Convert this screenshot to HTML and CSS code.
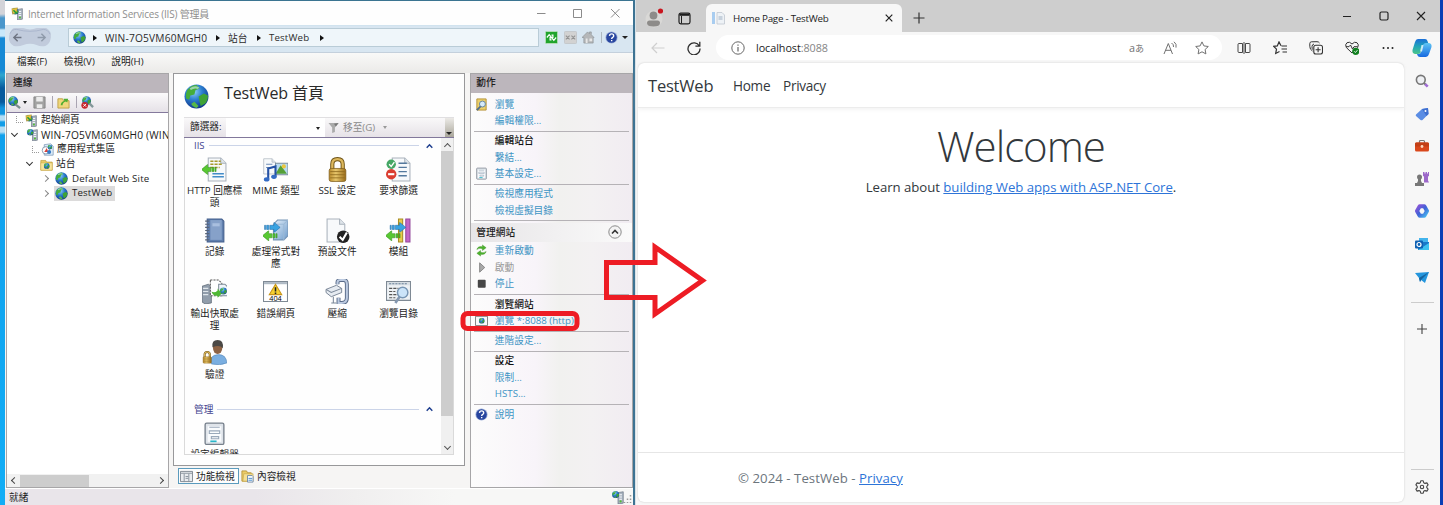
FILE: index.html
```html
<!DOCTYPE html>
<html lang="zh-Hant">
<head>
<meta charset="utf-8">
<title>IIS - TestWeb</title>
<link rel="stylesheet" href="styles.css">
</head>
<body>
<svg width="0" height="0" class="defs">
  <defs>
    <radialGradient id="sea" cx=".4" cy=".3" r=".75"><stop offset="0" stop-color="#8fd0f5"/><stop offset=".45" stop-color="#2c7fd0"/><stop offset="1" stop-color="#0d2f86"/></radialGradient>
    <linearGradient id="gold" x1="0" x2="1"><stop offset="0" stop-color="#b98a2c"/><stop offset=".4" stop-color="#e8c76c"/><stop offset="1" stop-color="#9a6b18"/></linearGradient>
    <linearGradient id="box" x1="0" y1="0" x2="1" y2="1"><stop offset="0" stop-color="#e6f1fb"/><stop offset="1" stop-color="#6d9bcb"/></linearGradient>
    <linearGradient id="cop1" x1="0" y1="0" x2="0" y2="1"><stop offset="0" stop-color="#1b6fd8"/><stop offset=".5" stop-color="#21a6b8"/><stop offset="1" stop-color="#4cc58a"/></linearGradient>
    <linearGradient id="cop2" x1="0" y1="0" x2="0" y2="1"><stop offset="0" stop-color="#5fc6f5"/><stop offset="1" stop-color="#1769e0"/></linearGradient>
    <linearGradient id="m365" x1="0" y1="0" x2="1" y2="1"><stop offset="0" stop-color="#8a55d8"/><stop offset=".5" stop-color="#3f62d6"/><stop offset="1" stop-color="#48b7ee"/></linearGradient>
  </defs>
  <symbol id="globe" viewBox="0 0 24 24"><circle cx="12" cy="12" r="11.500" fill="url(#sea)"/><path d="M3 6Q7 1 12 1l3 3-4 2-1 4-4 1-1 4-3-1q-1-4 1-8z" fill="#45ad3a"/><path d="M14 12l5-3 4 2q0 5-3 8l-4 2-1-4z" fill="#3fa336"/><path d="M7 19l3-2 4 4-2 2q-4-1-5-4z" fill="#57b848"/><path d="M6 5q4-3 8-1" fill="none" stroke="#d7f0fa" stroke-opacity=".6" stroke-width="2"/></symbol>
  <symbol id="server" viewBox="0 0 16 16"><path d="M8 3l6-1v13l-6 1z" fill="#a9b4c0" stroke="#6a7684" stroke-width=".8"/><path d="M9.500 5.500h3M9.500 8h3M9.500 10.500h3" stroke="#f6f8fa" stroke-width="1.200"/><circle cx="11" cy="13" r="1.200" fill="#50c030"/><use href="#globe" x="1" y="1" width="8.500" height="8.500"/></symbol>
  <symbol id="startpg" viewBox="0 0 16 16"><use href="#server"/><path d="M1 2l7-1-1 5-5 3z" fill="#e8c440" stroke="#9b8124" stroke-width=".5"/><path d="M3 4l4 4" stroke="#279c39" stroke-width="2"/></symbol>
  <symbol id="pool" viewBox="0 0 16 16"><path d="M4 2l8-1 3 3v11H4z" fill="#dceaf7" stroke="#6c8cad" stroke-width=".8"/><circle cx="6" cy="9" r="4.500" fill="#fff" stroke="#748ca5"/><use href="#globe" x="8" y="2" width="6" height="6"/><path d="M4 11l3-5 2 5z" fill="#d8413a"/><circle cx="10" cy="11" r="2.500" fill="#357bc7"/></symbol>
  <symbol id="folder" viewBox="0 0 16 16"><path d="M1 3h6l1 2h7v10H1z" fill="#eacb66" stroke="#b99632" stroke-width=".8"/><path d="M1 6h14v9H1z" fill="#f7e49c" stroke="#c9a844" stroke-width=".6"/><use href="#globe" x="4.500" y="6" width="7.500" height="7.500"/></symbol>
  <symbol id="help" viewBox="0 0 16 16"><circle cx="8" cy="8" r="7.500" fill="#9fb0d8"/><circle cx="8" cy="8" r="6.500" fill="#27459f"/><path d="M5.500 6q.2-2.500 2.700-2.500T10.700 6q0 1-1.300 1.800Q8.200 8.500 8.200 9.700M8.200 11v1.700" fill="none" stroke="#fff" stroke-width="1.700"/></symbol>
  <symbol id="form" viewBox="0 0 24 24"><rect x="3" y="2" width="18" height="20.500" rx="1.500" fill="#dfe4ea" stroke="#77808c" stroke-width="1.300"/><path d="M5.500 5h13v15h-13z" fill="#f9fbfd"/><path d="M7 6h10M7 9.500h10v2.500H7zM9 15h7v2H9z" fill="none" stroke="#9aa9ba" stroke-width="1.100"/><path d="M8 19.500h6" stroke="#28b6c9" stroke-width="1.600"/></symbol>
  <symbol id="page" viewBox="0 0 24 24"><path d="M4 1h12l5 5v17H4z" fill="#f7f9fb" stroke="#a9b2bc"/><path d="M16 1v5h5" fill="#dfe5ea" stroke="#a9b2bc"/></symbol>
  <symbol id="lock" viewBox="0 0 24 24"><path d="M7 13V7q0-5 5-5t5 5v6" fill="none" stroke="#6e5315" stroke-width="4"/><path d="M7 13V7q0-5 5-5t5 5v6" fill="none" stroke="#dcb75c" stroke-width="2.200"/><rect x="4" y="11" width="16" height="12.500" rx="2" fill="url(#gold)" stroke="#7c5a17" stroke-width=".7"/><path d="M5 14h14M5 17h14M5 20h14" stroke="#8f6a1e" stroke-width=".8"/></symbol>
  <symbol id="left" viewBox="0 0 16 10"><path d="M0 5l6-5v3h3v4H6v3zM10 3h2v4h-2zM13 3h1v4h-1z" fill="#58c832" stroke="#318c1c" stroke-width=".5"/></symbol>
  <symbol id="right" viewBox="0 0 16 10"><path d="M16 5l-6-5v3H6v4h4v3zM3 3h2v4H3zM1 3h1v4H1z" fill="#38a3e2" stroke="#1c68a8" stroke-width=".5"/></symbol>
  <symbol id="up" viewBox="0 0 8 6"><path d="M.8 5L4 1.600 7.200 5" fill="none" stroke="currentColor" stroke-width="1.700"/></symbol>
</svg>
<div class="screen">
  <div class="desk"></div>
  <section class="iis">
    <header class="iis-title">
      <svg class="i13"><use href="#startpg"/></svg><span class="ttl">Internet Information Services (IIS) 管理員</span>
      <svg class="winctl" viewBox="0 0 86 12"><path d="M1 6.500h8.500M37.500 2.500h8v8h-8zM75 2l8.500 8.500M83.500 2L75 10.500" fill="none" stroke="#8b8b8b"/></svg>
    </header>
    <div class="iis-nav">
      <svg class="backfwd" viewBox="0 0 46 20"><path d="M6 0h10q7 3 14 0h10q6 3 5 10t-6 9q-5 1-9-1-7-3-14 0-5 2-10 1-6-3-5-10T6 0z" fill="#c1cbdc"/><path d="M2 6q2-5 7-4.500 14 4 28 0 5 0 7 5" fill="none" stroke="#aab5cc"/><path d="M14 10H6m4-4l-4 4 4 4" fill="none" stroke="#6f7583" stroke-width="1.500"/><path d="M31 10h8m-4-4l4 4-4 4" fill="none" stroke="#8f9aaa" stroke-width="1.500"/></svg>
      <div class="crumbs"><svg class="i13"><use href="#globe"/></svg><b></b><span class="wn">WIN-7O5VM60MGH0</span><b></b><span class="zt">站台</span><b></b><span class="tw">TestWeb</span><b></b></div>
      <div class="navico">
        <svg viewBox="0 0 14 14"><rect x=".5" y=".5" width="13" height="13" rx="1" fill="#21a42c" stroke="#b6dfb7"/><path d="M2 7l2.500-3L7 7H5.500v2.500H7M12 7L9.500 10 7 7h1.500V4.500H7" fill="none" stroke="#fff" stroke-width="1.300"/></svg>
        <svg viewBox="0 0 14 14"><rect x=".5" y=".5" width="13" height="13" rx="1" fill="#d2d2d2" stroke="#c2c6c9"/><path d="M2 5l4 4m0-4L2 9m6-4l4 4m0-4L8 9" stroke="#929292" stroke-width="1.200"/></svg>
        <svg viewBox="0 0 14 14"><path d="M0 7l6-6 2 2V1h2v3l3 3h-1v6H2V7z" fill="#b5b7b9" stroke="#8c9195" stroke-width=".7"/><path d="M4 8h2v5H4zM8 8h3v3H8z" fill="#e7e7e7"/></svg>
        <i></i><svg class="hp"><use href="#help"/></svg><em></em>
      </div>
    </div>
    <nav class="iis-menu"><span>檔案(F)</span><span>檢視(V)</span><span>說明(H)</span></nav>
    <div class="iis-body">
      <aside class="conn">
        <h2>連線</h2>
        <div class="ctool">
          <svg viewBox="0 0 14 14"><use href="#globe" width="11" height="11"/><path d="M8 9l5 4" stroke="#7b8d8e" stroke-width="2.500"/></svg><em></em>
          <svg class="sv" viewBox="0 0 14 14"><path d="M1 1h12v12H1z" fill="#a2a2a2" stroke="#858585"/><path d="M3.500 1h7v5h-7zM4 9h6v4H4z" fill="#ececec"/></svg><i></i>
          <svg viewBox="0 0 14 14"><path d="M1 3h5l1 2h6v8H1z" fill="#f0d77c" stroke="#c0a045"/><path d="M4 10q0-4 4-5L7 3l5 0-1 4-1.500-1Q6 7 6 10z" fill="#50ae31"/></svg><i></i>
          <svg viewBox="0 0 14 14"><use href="#globe" x="1" width="10" height="10"/><path d="M9 8l4 4" stroke="#849799" stroke-width="2.500"/><circle cx="4" cy="10" r="3.600" fill="#c6282e"/><path d="M2.500 8.500l3 3m0-3l-3 3" stroke="#fff"/></svg>
        </div>
        <div class="tree">
          <div class="r r0"><u></u><svg><use href="#startpg"/></svg><span>起始網頁</span></div>
          <div class="r r1"><s class="dn"></s><svg><use href="#server"/></svg><span class="srv">WIN-7O5VM60MGH0 (WIN</span></div>
          <div class="r r2"><u></u><svg><use href="#pool"/></svg><span>應用程式集區</span></div>
          <div class="r r3"><s class="dn"></s><svg><use href="#folder"/></svg><span>站台</span></div>
          <div class="r r4"><s></s><svg><use href="#globe"/></svg><span class="dws">Default Web Site</span></div>
          <div class="r r4 sel"><s></s><div><svg><use href="#globe"/></svg><span class="dws">TestWeb</span></div></div>
        </div>
        <div class="hscroll"><s></s><p></p><s class="rt"></s></div>
      </aside>
      <main class="mid">
        <div class="pane">
          <h1><svg><use href="#globe"/></svg><span>TestWeb 首頁</span></h1>
          <div class="filter"><span>篩選器:</span><div class="inp"><em></em></div><div class="go"><svg viewBox="0 0 12 12"><path d="M0 1h11L7 6v5l-3 1V6z" fill="#aaa"/><path d="M6 2l5-1-3 4z" fill="#777"/></svg><span>移至(G)</span><em></em></div><div class="ovf"><em></em></div></div>
          <div class="list">
            <div class="cont">
              <div class="grp"><span class="ii">IIS</span><hr><svg><use href="#up"/></svg></div>
              <div class="grid">
                <div><svg viewBox="0 0 24 24"><use href="#page" x="2"/><path d="M8 4h10M8 7h11M8 10h9" stroke="#a79a2d" stroke-width="1.500" stroke-dasharray="3 1"/><path d="M10 16h11M10 19h11" stroke="#438cc9" stroke-width="1.500"/><use href="#left" x="-1" y="7" width="17" height="10"/></svg>HTTP 回應標頭</div>
                <div><svg viewBox="0 0 24 24"><use href="#page" x="-2" width="16" height="18"/><path d="M3 7h6M3 10h6" stroke="#6f8db7"/><path d="M12 6h12v11H12z" fill="#b8dbf1" stroke="#7b8d9b"/><path d="M12 16l5-8 6 8z" fill="#55a037"/><circle cx="20" cy="9" r="2" fill="#eac63e"/><path d="M5 21V11l7-2v10" fill="none" stroke="#2552a5" stroke-width="2"/><ellipse cx="3.500" cy="21.500" rx="2.700" ry="2" fill="#346bc4"/><ellipse cx="10.500" cy="19" rx="2.700" ry="2" fill="#346bc4"/></svg>MIME 類型</div>
                <div><svg><use href="#lock"/></svg>SSL 設定</div>
                <div><svg viewBox="0 0 24 24"><use href="#page" x="2"/><path d="M12 6h8M12 10h8M12 14h8M12 18h8" stroke="#54799d" stroke-width="1.300"/><circle cx="5" cy="7" r="4.500" fill="#45a765"/><path d="M3 7l2 2 3-4" fill="none" stroke="#fff" stroke-width="1.300"/><circle cx="5" cy="16.500" r="5" fill="#db3e31"/><path d="M2 16.500h6" stroke="#fff" stroke-width="2"/></svg>要求篩選</div>
                <div><svg viewBox="0 0 24 24"><path d="M5 1h14l2 2v20H5z" fill="#607fae" stroke="#435e8c"/><path d="M8 2h11v19H8z" fill="#86a1c9"/><path d="M10 5h7v3h-7z" fill="#a9bfdf"/><path d="M3 3h4M3 6h4M3 9h4M3 12h4M3 15h4M3 18h4M3 21h4" stroke="#596579"/></svg>記錄</div>
                <div><svg viewBox="0 0 24 24"><path d="M10 6l4-4h10v15l-4 4H10z" fill="url(#box)" stroke="#7795b5"/><path d="M10 6h10v15M20 6l4-4" fill="none" stroke="#9cb9d6"/><use href="#right" x="0" y="4" width="17" height="10"/><use href="#left" x="-1" y="12" width="17" height="10"/></svg>處理常式對應</div>
                <div><svg viewBox="0 0 24 24"><use href="#page" x="-2"/><circle cx="17.500" cy="18" r="6" fill="#222"/><path d="M14 18l3 3 4-7" fill="none" stroke="#fff" stroke-width="2"/></svg>預設文件</div>
                <div><svg viewBox="0 0 24 24"><path d="M12 1h4v22h-4z" fill="#e6cc4b" stroke="#a78c23"/><path d="M19 1h4v22h-4z" fill="#c266c7" stroke="#93479c"/><use href="#right" x="2" y="4" width="18" height="10"/><use href="#left" x="-1" y="12" width="17" height="10"/></svg>模組</div>
                <div><svg viewBox="0 0 24 24"><path d="M0 7l6-2 3 2v16l-6 1-3-2z" fill="#919dab" stroke="#5b6672" stroke-width=".7"/><path d="M1 9h5M1 12h5M1 15h5" stroke="#dfe5ea"/><path d="M8 1h8l3 3v12H8z" fill="#fff" stroke="#555" stroke-dasharray="2 1"/><path d="M16 5h6l3 3v8h-9z" fill="#eff5fa" stroke="#7e8b98"/><use href="#globe" x="17" y="8" width="7" height="7"/><path d="M9 12q3 2 6-1v-2l4 5-4 4v-2q-4 1-6-4z" fill="#4fb834"/></svg>輸出快取處理</div>
                <div><svg viewBox="0 0 24 24"><path d="M.5 2.500h23v19H.5z" fill="#fff" stroke="#7e8994"/><path d="M1 3h22v2H1z" fill="#aeb9c4"/><path d="M12 5l6 10H6z" fill="#f5d12f" stroke="#c89419"/><path d="M12 8v4M12 13v1.500" stroke="#222" stroke-width="1.500"/><text x="12" y="21" text-anchor="middle" font-size="7" class="t404">404</text></svg>錯誤網頁</div>
                <div><svg viewBox="0 0 24 24"><path d="M12 5V3q0-2 3-2h3q3 0 3 4v13q0 5-5 5h-3v-5" fill="none" stroke="#596b88" stroke-width="3.800"/><path d="M12 5V3q0-2 3-2h3q3 0 3 4v13q0 5-5 5h-3v-5" fill="none" stroke="#bccae0" stroke-width="2"/><path d="M1 10l10-4 5 3v4L6 17l-5-4z" fill="#e6ebf1" stroke="#667487" stroke-width=".8"/><path d="M1 10l5 3 10-4M8 17v6M6 23h5" fill="none" stroke="#7a8798"/></svg>壓縮</div>
                <div><svg viewBox="0 0 24 24"><path d="M.5 2.500h23v18H.5z" fill="#eef2f5" stroke="#7e8994"/><path d="M1 3h22v3H1z" fill="#d9dfe4"/><path d="M3 4.500h17" stroke="#698098" stroke-dasharray="2 1"/><path d="M3 9h9M3 12h6M3 15h9M3 18h6" stroke="#555" stroke-dasharray="3 1"/><path d="M13 17l-4 6" stroke="#8598b0" stroke-width="2.500"/><circle cx="16" cy="13" r="5" fill="#c7e2fa" fill-opacity=".9" stroke="#7896b4" stroke-width="1.400"/></svg>瀏覽目錄</div>
                <div><svg viewBox="0 0 24 24"><path d="M9 23V17q2-3 7-3 7 0 8 8-7 3-15 1z" fill="#7aaee0" stroke="#4a7eb0" stroke-width=".5"/><ellipse cx="15" cy="7.500" rx="4.500" ry="6" fill="#8d6244"/><path d="M10 7q-1-7 5-7t5 8q-3-4-10-1z" fill="#4a4845"/><use href="#lock" x="-1" y="9" width="12" height="15"/></svg>驗證</div>
              </div>
              <div class="grp g2"><span>管理</span><hr><svg><use href="#up"/></svg></div>
              <div class="grid"><div><svg><use href="#form"/></svg><label>設定編輯器</label></div></div>
            </div>
            <div class="vscroll"><s></s><p></p><s class="dn"></s></div>
          </div>
        </div>
        <div class="tabs"><div class="on"><svg viewBox="0 0 14 12"><path d="M.5.500h13v11H.5z" fill="#e9ecef" stroke="#7c858f"/><path d="M1 2.500h12M4.500 3v9M9.500 3v9M6 6h3M6 8h3" stroke="#87919c"/></svg><span>功能檢視</span></div><div><svg viewBox="0 0 14 14"><path d="M1 1h5l1 2h4v9H1z" fill="#edcd68" stroke="#b8963b"/><path d="M3 4h10v8H2z" fill="#f5df93" stroke="#c4a64b" stroke-width=".7"/><path d="M7 6h5l1 1v6H7z" fill="#fff" stroke="#7089a5"/><path d="M8 9h4M8 11h4" stroke="#3e87cb"/></svg><span>內容檢視</span></div></div>
      </main>
      <aside class="act">
        <h2>動作</h2>
        <div class="acts">
          <p><svg viewBox="0 0 14 14"><path d="M2 1h10v12H2z" fill="#ecd06a" stroke="#b39136"/><circle cx="8" cy="6.500" r="3.200" fill="#d5ebfa" stroke="#5e7f9c"/><path d="M6 9l-4 4" stroke="#4f6d8b" stroke-width="2"/></svg>瀏覽</p><p>編輯權限...</p><hr>
          <p class="bd">編輯站台</p><p>繫結...</p><p><svg><use href="#form"/></svg>基本設定...</p><hr>
          <p>檢視應用程式</p><p>檢視虛擬目錄</p><hr>
          <h3>管理網站<svg viewBox="0 0 14 14"><circle cx="7" cy="7" r="6.200" fill="#f3f3f3" stroke="#8b8b8b"/><path d="M4 8.500l3-3 3 3" fill="none" stroke="#333" stroke-width="1.600"/></svg></h3>
          <p><svg viewBox="0 0 14 14"><path d="M2 6q1-4 6-3V1l4 3-4 3V5Q4 4 2 6zM12 8q-1 4-6 3v2l-4-3 4-3v2q4 1 6-1z" fill="#4cb22e" stroke="#39891f" stroke-width=".4"/></svg>重新啟動</p>
          <p class="off"><svg viewBox="0 0 14 14"><path d="M5 2l5.500 5L5 12z" fill="#a9a9a9" stroke="#858585"/></svg>啟動</p>
          <p><svg viewBox="0 0 14 14"><rect x="3" y="3" width="8.500" height="8.500" rx="1" fill="#464646"/></svg>停止</p><hr>
          <p class="bd">瀏覽網站</p><p><svg viewBox="0 0 14 14"><path d="M.5 2.500h13v10H.5z" fill="#f8f9fa" stroke="#777"/><use href="#globe" x="4" y="4" width="6.500" height="6.500"/></svg>瀏覽 *:8088 (http)</p><hr>
          <p>進階設定...</p><hr>
          <p class="bd">設定</p><p>限制...</p><p>HSTS...</p><hr>
          <p><svg><use href="#help"/></svg>說明</p>
        </div>
      </aside>
    </div>
    <footer class="status"><span>就緒</span><svg viewBox="0 0 22 14"><use href="#server" width="14" height="14"/><path d="M19.500 5v8M16.500 8.500V13M13.500 12v1" stroke="#999" stroke-width="1.500" stroke-dasharray="1.500 2"/></svg></footer>
  </section>
  <section class="edge">
    <header class="strip">
      <svg class="av" viewBox="0 0 18 20"><circle cx="9" cy="11" r="8.500" fill="#d9d8d6"/><circle cx="8.500" cy="7.500" r="3.900" fill="#8d8b89"/><path d="M2 15q0-2.500 2.500-2.500h8q2.500 0 2.500 2.500 0 3.500-6.500 3.500T2 15z" fill="#8d8b89"/><circle cx="15.500" cy="3" r="2.600" fill="#c9151e"/></svg>
      <svg class="ws" viewBox="0 0 13 13"><rect x="1" y="1.200" width="11" height="10.600" rx="1.800" fill="none" stroke="#1e1e1e" stroke-width="1.200"/><path d="M1.500 2.800h10" stroke="#1e1e1e" stroke-width="2"/><path d="M3.500 4v7.500" stroke="#1e1e1e"/></svg>
      <div class="tab"><svg viewBox="0 0 13 13"><path d="M0 0h3v12H0z" fill="#a9cdf0"/><path d="M5 .5h5l2.500 2.500v9H5z" fill="#eef2f6" stroke="#bfc7d0" stroke-width=".8"/><path d="M6.500 5h4M6.500 7h4" stroke="#9fb0c3"/></svg><span>Home Page - TestWeb</span><svg class="x" viewBox="0 0 8 8"><path d="M.7.700l6.600 6.600M7.300.700L.7 7.300" stroke="#222" stroke-width="1.200"/></svg></div>
      <svg class="add" viewBox="0 0 12 12"><path d="M6 .5v11M.5 6h11" stroke="#333" stroke-width="1.200"/></svg>
      <svg class="wc" viewBox="0 0 84 12"><path d="M1 6.500h8M75 2l8 8M83 2l-8 8" fill="none" stroke="#222" stroke-width="1.100"/><rect x="38" y="2" width="8" height="8" rx="1.500" fill="none" stroke="#222" stroke-width="1.200"/></svg>
    </header>
    <div class="bar">
      <svg class="bk" viewBox="0 0 14 12"><path d="M13.500 6H1M6 1L1 6l5 5" fill="none" stroke="#cfcfcf" stroke-width="1.200"/></svg>
      <svg class="rl" viewBox="0 0 14 14"><path d="M12.300 5A6 6 0 1 0 13 7.500M12.800.800v4.400H8.400" fill="none" stroke="#2d2d2d" stroke-width="1.300"/></svg>
      <div class="addr"><svg viewBox="0 0 14 14"><circle cx="7" cy="7" r="6.200" fill="none" stroke="#666"/><path d="M7 6v4.500M7 3.500v1.300" stroke="#666" stroke-width="1.200"/></svg><span>localhost<i>:8088</i></span>
        <div class="ai"><span class="tr">a<small>あ</small></span><svg viewBox="0 0 14 14"><path d="M1 13L5.300 2.500 9.500 13M2.500 9.300H8M8.500 2q2.500 1.500 2 4M11 .8q3 2.200 2 5.800" fill="none" stroke="#717171"/></svg><svg viewBox="0 0 14 14"><path d="M7 .9l1.900 4 4.400.6-3.200 3 .8 4.400L7 10.800 3.100 12.900l.8-4.400-3.200-3 4.400-.6z" fill="none" stroke="#717171"/></svg></div>
      </div>
      <div class="tools">
        <svg viewBox="0 0 14 14"><path d="M5.500 2.500H2q-1 0-1 1v7q0 1 1 1h3.500M8.500 2.500H12q1 0 1 1v7q0 1-1 1H8.500M5.500 2.500v9M8.500 2.500v9M7 1v12" fill="none" stroke="#333" stroke-width=".9"/></svg>
        <svg viewBox="0 0 14 14"><path d="M8 4.700L6 .9 4.300 4.900.7 5.300l2.800 2.900-.8 4.300L6.500 10.500M8.500 5H14M8.500 8H14M9.500 11H14" fill="none" stroke="#333" stroke-width="1.200"/></svg>
        <svg viewBox="0 0 14 14"><path d="M3.500 10Q.8 8.500.8 5.500V2.500Q.8 1 2.400.8L8 .7q1.700 0 2.500 1.300M3.500 8.500Q3 7.500 3 5.500q0-2 2-2.500" fill="none" stroke="#333" stroke-width="1"/><rect x="4.800" y="4.300" width="8.700" height="8.700" rx="2" fill="#f7f7f7" stroke="#333" stroke-width="1.100"/><path d="M9.100 6.200v5M6.600 8.700h5" stroke="#333" stroke-width="1.100"/></svg>
        <svg viewBox="0 0 14 14"><path d="M7 12L1.300 6.500Q-.3 3.500 2 1.700 4.500.2 7 3q2.500-2.800 5-1.300 2.300 1.800.7 4.800zM1 5.700h3L5.500 4l2 4L9 5.700h3.500" fill="none" stroke="#333" stroke-width="1"/><circle cx="10.800" cy="10.300" r="3.600" fill="#128020"/><path d="M9.200 10.300l1.200 1.200 2-2.300" fill="none" stroke="#fff" stroke-width=".9"/></svg>
        <svg viewBox="0 0 14 14"><g fill="#222"><circle cx="2.500" cy="7" r="1"/><circle cx="7" cy="7" r="1"/><circle cx="11.500" cy="7" r="1"/></g></svg>
      </div>
      <svg class="cp" viewBox="0 0 20 20"><path d="M6 1h7q2 0 2.500 2l1 3h-3q-2 0-2.500 2l-2 6q-.8 2-3 2H3q-3-.5-2.500-4L3 4q.8-3 3-3z" fill="url(#cop1)"/><path d="M14 5h3q3 .5 2.500 4L17 16q-.8 3-3 3H8q-2 0-2.700-2L5 16h1.500q2 0 2.500-2l2-7q.8-2 3-2z" fill="url(#cop2)"/><path d="M9.500 7h2L10 13.500H8z" fill="#effaff" opacity=".8"/></svg>
    </div>
    <div class="view">
      <div class="web">
        <nav><b>TestWeb</b><span class="hm">Home</span><span class="pv">Privacy</span></nav>
        <article><h1>Welcome</h1><p>Learn about <a>building Web apps with ASP.NET Core</a>.</p></article>
        <footer><span>© 2024 - TestWeb - <a>Privacy</a></span></footer>
      </div>
      <aside class="side">
        <svg viewBox="0 0 14 14"><circle cx="5.800" cy="5.800" r="4.400" fill="#eef0f3" stroke="#777" stroke-width="1.600"/><path d="M9 9l1.500 1.500" stroke="#777" stroke-width="2"/><path d="M10.200 10.200l2.500 2.500" stroke="#a06cd5" stroke-width="2.600"/></svg>
        <svg viewBox="0 0 14 14"><path d="M1 7.500L7 2l6-1 .5 6-6 6q-1 .6-2 0L1 9q-.6-.7 0-1.500z" fill="#5b8de4"/><path d="M7 2l6-1 .5 6-2 2z" fill="#3f70d0"/><circle cx="10.500" cy="4" r="1" fill="#fff"/></svg>
        <svg viewBox="0 0 14 14"><path d="M4.500 4V2.500Q4.500 1.500 5.500 1.500h3q1 0 1 1V4" fill="none" stroke="#777" stroke-width="1.200"/><rect y="3.500" width="14" height="9" rx="1.500" fill="#d9481c"/><path d="M0 4.500q0-1 1.500-1h11q1.500 0 1.500 1v3H0z" fill="#c23f16"/><circle cx="7" cy="7.500" r="1.400" fill="#ffd8bf"/></svg>
        <svg viewBox="0 0 14 14"><path d="M8 0h1.500v1.500h1V0H12v1.500h1V0h1v4l-1 .5v4l1 2H9v-6L8 4z" fill="#9c68c9"/><circle cx="4.500" cy="5" r="2.500" fill="#777"/><path d="M3 7h3v2l1 2H2l1-2zM0 11h9v3H0z" fill="#777"/></svg>
        <svg viewBox="0 0 14 14"><path d="M4.700 2.200h4.600L12 7l-2.700 4.800H4.700L2 7z" fill="none" stroke="url(#m365)" stroke-width="4" stroke-linejoin="round"/></svg>
        <svg viewBox="0 0 14 14"><path d="M4 1h9v5H4z" fill="#43b4ec"/><path d="M3 5h11v8H3z" fill="#1978c8"/><path d="M3 13l11-7v7z" fill="#3cc2f0"/><rect y="3.500" width="8" height="8" rx="1" fill="#0e61b3"/><circle cx="4" cy="7.500" r="2" fill="none" stroke="#fff" stroke-width="1.200"/></svg>
        <svg viewBox="0 0 14 14"><path d="M0 3l14-1-4 11-4-3-1 2-1-4z" fill="#2496dd"/><path d="M4 8l10-6-8 8-1 2z" fill="#14639f"/></svg>
        <hr>
        <svg class="pl" viewBox="0 0 14 14"><path d="M7 2v10M2 7h10" stroke="#444" stroke-width="1.100"/></svg>
        <hr class="h2">
        <svg class="gear" viewBox="0 0 14 14"><path d="M5.800.8h2.400l.5 1.900 1.300.7 1.900-.5 1.200 2-1.300 1.400v1.400l1.300 1.400-1.200 2-1.900-.5-1.300.7-.5 1.900H5.800l-.5-1.900-1.300-.7-1.900.5-1.200-2 1.300-1.400V6.300L.9 4.900l1.200-2 1.900.5 1.300-.7z" fill="none" stroke="#444" stroke-width="1.100" stroke-linejoin="round"/><circle cx="7" cy="7" r="1.700" fill="none" stroke="#444" stroke-width="1.100"/></svg>
      </aside>
    </div>
  </section>
  <div class="rim"></div>
  <svg class="marks" viewBox="0 0 1443 505"><rect x="463" y="313.500" width="114" height="15" rx="4.500"/><path d="M606.500 262.500H655V247l47.500 33.500-47.500 33.500V297.500H606.500z"/></svg>
</div>
</body>
</html>
```
FILE: styles.css
```css
* { box-sizing: border-box; }
body { margin: 0; font-family: "Open Sans", "Noto Sans CJK TC", sans-serif; font-size: 9.7px; color: #1c1c1c; }
h1, h2, h3, p, hr { margin: 0; font-weight: normal; }
svg { display: block; flex: none; }
.defs { position: absolute; }
.screen { position: relative; display: flex; width: 1443px; height: 505px; overflow: hidden; background: #f7f7f7; white-space: nowrap; }
.marks { position: absolute; inset: 0; width: 1443px; height: 505px; }
.marks * { fill: none; stroke: #ed1c24; stroke-width: 5; }
.desk { width: 5px; flex: none; background: linear-gradient(#d3d4d9 0 14px, #4a97cc 18px 28px, #c9e8fa 30px 36px, #1689d5 38px 70px, #2ea6cf 75px, #075a9d 88px 102px, #1296df 108px 114px, #b3def5 116px 120px, #129de7 122px 126px, #b3def5 127px 132px, #10a0ec 135px, #12adf6); }
.rim { width: 3px; flex: none; background: #0a3fb5; }
.iis { width: 630px; flex: none; display: flex; flex-direction: column; background: #f5f4f3; border-top: 1px solid #3b7491; border-right: 2px solid #3d7393; }
.iis-title { height: 24px; flex: none; background: #fefefe; display: flex; align-items: center; padding-left: 6px; color: #8e8e8e; }
.i13 { width: 13px; height: 13px; }
.ttl { margin-left: 4px; font-size: 10px; letter-spacing: -.18px; }
.winctl { width: 86px; height: 12px; margin: -1px 11px 0 auto; }
.iis-nav { height: 28px; flex: none; display: flex; align-items: center; background: #d8e6f1; border-bottom: 1px solid #c4d0dc; border-top: 1px solid #d1e3ef; padding: 0 0 3px 3px; }
.backfwd { width: 44px; height: 19px; }
.crumbs { width: 471px; height: 19px; margin-left: 16px; border: 1px solid #b9ccd7; background: #eff6fa; display: flex; align-items: center; padding-left: 4px; }
.crumbs b { border: 3px solid transparent; border-left: 4px solid #111; border-right: 0; margin: 0 8px 0 7px; }
.crumbs span { color: #2c2c2c; }
.wn { width: 103px; font-size: 10.200px; letter-spacing: .18px; }
.crumbs .wn + b { margin-left: 8px; }
.zt { width: 20px; }
.zt + b { margin-left: 9px !important; }
.tw { width: 40px; letter-spacing: .15px; }
.tw + b { margin-left: 11px !important; }
.navico { display: flex; align-items: center; margin-left: 6px; }
.navico svg { width: 13px; height: 13px; margin-right: 5.500px; }
.navico i { width: 1px; height: 11px; background: #aeb8c0; margin-right: 3px; }
.navico .hp { margin-right: 4px; }
em { display: block; width: 0; border: 3px solid transparent; border-top: 3px solid #222; border-bottom: 0; flex: none; }
.iis-menu { height: 20px; flex: none; background: linear-gradient(#f9f9f8, #ebeae8); display: flex; padding: 0 0 0 12px; gap: 16.500px; line-height: 18px; letter-spacing: .03px; }
.iis-body { height: 415px; flex: none; display: flex; background: #f6f5f4; }
.conn { width: 163px; margin-left: 1px; border: 1px solid #a7a6a8; background: #fff; display: flex; flex-direction: column; }
h2 { height: 18.500px; flex: none; line-height: 18px; background: #bcb6bc; padding-left: 6px; font-size: 9.700px; font-weight: 500; }
.ctool { height: 20px; flex: none; background: linear-gradient(#fbfafb, #e5e1e7); border-bottom: 1px solid #84799c; display: flex; align-items: center; padding-left: 1px; }
.ctool svg { width: 13px; height: 13px; }
.ctool em { margin: 0 6px 0 2px; border-width: 3px 2.500px 0; }
.ctool i { width: 1px; height: 12px; background: #aaa5b2; margin: 0 4px 0 6px; }
.tree { flex: 1; padding-top: .5px; overflow: hidden; }
.r { height: 14.650px; display: flex; align-items: center; line-height: 14.650px; }
.r svg { width: 13px; height: 13px; }
.r span { margin-left: 3px; }
.r u { width: 7px; height: 7px; border-left: 1px dotted #999; border-bottom: 1px dotted #999; margin: -1px 2px 0 0; }
.r0 { padding-left: 9px; }
.r0 + .r1 { padding-left: 5px; }
.r2 { padding-left: 25px; }
.r3 { padding-left: 20px; }
.r4 { padding-left: 36px; }
.r3 svg { margin-left: 8px; }
.r1 svg { margin-left: 9px; }
.r .srv { font-size: 10.200px; letter-spacing: .18px; margin-left: 2px; }
.r .dws { letter-spacing: .15px; margin-left: 4px; }
s { width: 5px; height: 5px; border: solid #888; border-width: 1.300px 1.300px 0 0; transform: rotate(45deg); flex: none; }
s.dn { transform: rotate(135deg); border-color: #333; margin-top: -3px; }
.r4 > svg { margin-left: 7px; }
.sel div { display: flex; align-items: center; background: #dcdbdb; height: 14.650px; margin-left: 6px; padding: 0 3px 0 1px; }
.hscroll { height: 13px; flex: none; background: #f1f1f1; display: flex; align-items: center; padding: 0 5px 0 5px; }
.hscroll s { transform: rotate(225deg); border-color: #444; border-width: 1.600px 1.600px 0 0; }
.hscroll s.rt { transform: rotate(45deg); margin-left: auto; }
.hscroll p { width: 69px; height: 12px; background: #cdcdcd; margin-left: 3px; }
.mid { width: 293px; margin-left: 4px; }
.pane { height: 393px; border: 1px solid #98989a; background: #fefefe; padding: 0 10px; }
.pane h1 { height: 43px; display: flex; align-items: center; padding-top: 3px; font-size: 16px; color: #2a2a2a; }
.pane h1 svg { width: 25px; height: 25px; margin-top: -2px; }
.pane h1 span { margin: -10px 0 0 15px; letter-spacing: -.1px; }
.filter { height: 21px; display: flex; background: linear-gradient(#f9f8f9, #e6e2e7); border-top: 1px solid #e0dfe1; border-bottom: 1px solid #82789b; line-height: 18px; }
.filter > span { width: 42px; padding-left: 6px; }
.inp { width: 99px; background: #fff; padding: 9px 0 0 90px; }
.inp em { border-width: 3px 2.500px 0; }
.go { flex: 1; display: flex; align-items: center; color: #8a8a8a; padding-left: 3px; }
.go svg { width: 12px; height: 11px; margin-right: 3px; }
.go em { border-top-color: #999; margin-left: 8px; border-width: 3px 2.500px 0; }
.ovf { width: 9px; background: linear-gradient(#ebe9e6, #aaa79b); display: flex; align-items: flex-end; padding: 0 0 2px 1px; }
.list { height: 317px; border: 1px solid #dadada; border-top: 0; display: flex; }
.cont { width: 256px; overflow: hidden; flex: none; }
.grp { height: 15px; display: flex; align-items: center; padding: 0 0 0 9px; color: #43438f; }
.grp hr { flex: 1; border: 0; height: 1px; background: #cbd4e8; margin: 0 7px 0 4px; }
.grp svg { width: 7px; height: 6px; color: #1f3f8f; margin-right: 8px; }
.ii { font-size: 9.500px; }
.grid { display: grid; grid-template-columns: repeat(4, 61.300px); grid-auto-rows: 61.300px; padding-top: 3.500px; margin-left: -1px; }
.grid > div { display: flex; flex-direction: column; align-items: center; white-space: normal; text-align: center; line-height: 12px; padding: 0 2px; word-break: break-all; }
.grid svg { width: 25px; height: 25px; margin-bottom: 3.500px; }
.g2 { margin-top: -.2px; }
.g2 + .grid { padding-top: 4px; }
.t404 { font-family: "Open Sans", sans-serif; font-weight: 400; }
.vscroll { flex: 1; background: #f0f0f0; display: flex; flex-direction: column; align-items: center; padding: 6px 0 5px; }
.vscroll s { transform: rotate(-45deg); border-color: #555; border-width: 1.500px 1.500px 0 0; }
.vscroll p { width: 12px; height: 265px; background: #cdcdcd; margin-top: 2px; }
.vscroll s.dn { transform: rotate(135deg); margin-top: auto; }
.tabs { height: 20px; display: flex; padding: 2px 0 0 5px; }
.tabs div { display: flex; align-items: center; height: 16px; padding: 0 1px; }
.tabs .on { width: 61px; border: 1px solid #5b9bbd; background: #fdfdfd; margin-right: 1px; }
.tabs svg { width: 13px; height: 13px; margin-right: 3px; }
.act { width: 163px; margin-left: 5px; border: 1px solid #a7a6a8; background: linear-gradient(90deg, #fcfcfc, #f8f4f9 40%, #f1f1ef 55%, #f3f1f2 75%, #f1ecf2); }
.act h2 { padding-left: 5px; }
.acts { padding-top: 4px; }
.acts p { position: relative; height: 16.500px; line-height: 16.500px; padding-left: 23.500px; color: #3d94c4; }
.acts p svg { position: absolute; left: 3.500px; top: 1px; width: 13px; height: 13px; }
.acts .bd { color: #111; font-weight: 500; }
.acts .off { color: #999; }
.acts hr { height: 1px; border: 0; background: #b5b2b6; margin: 1px 3px 1.700px; }
.acts h3 { height: 18.750px; display: flex; align-items: center; justify-content: space-between; padding: 0 10px 0 5px; font-size: 9.700px; font-weight: 500; background: linear-gradient(90deg, #e7e5e7, #fafafa); margin-bottom: 1.500px; }
.acts h3 svg { width: 14px; height: 14px; }
.status { flex: 1; display: flex; align-items: center; justify-content: space-between; padding-left: 4px; background: linear-gradient(90deg, #e9e5ea 0 250px, #f0efef 350px, #f7f7f6 450px); line-height: 15px; border-top: 1px solid #fff; }
.status svg { width: 22px; height: 14px; }

.edge { width: 805px; flex: none; background: #f7f7f7; border-left: 1px solid #d9e2e7; font-family: "Open Sans", sans-serif; }
.strip { height: 32px; background: #cecece; display: flex; align-items: center; }
.av { width: 18px; height: 20px; margin: 3px 0 0 9px; }
.ws { width: 13px; height: 13px; margin: 4px 0 0 15px; }
.tab { width: 196px; height: 28px; margin: 4px 0 0 15px; background: #f7f7f7; border-radius: 6px 6px 0 0; display: flex; align-items: center; padding: 0 9px 0 6px; font-size: 9.800px; }
.tab > svg { width: 13px; height: 13px; }
.tab span { margin-left: 8px; letter-spacing: -.25px; }
.tab .x { width: 8px; height: 8px; margin-left: auto; }
.add { width: 12px; height: 12px; margin: 3px 0 0 11px; }
.wc { width: 84px; height: 12px; margin: 0 14px 0 auto; }
.bar { height: 31px; display: flex; align-items: center; }
.bk { width: 14px; height: 12px; margin-left: 15px; }
.rl { width: 14px; height: 14px; margin-left: 22px; }
.addr { width: 506px; height: 25px; margin-left: 15px; background: #fff; border-radius: 13px; display: flex; align-items: center; padding: 0 13px 0 15px; font-size: 10.800px; }
.addr > svg { width: 14px; height: 14px; margin-right: 11px; }
.addr > span { letter-spacing: -.06px; }
.addr i { font-style: normal; color: #858585; }
.ai { margin-left: auto; display: flex; align-items: center; gap: 18.500px; color: #717171; }
.ai svg { width: 14px; height: 14px; }
.tr small { font: 9px "Noto Sans CJK JP", sans-serif; }
.tools { display: flex; gap: 22px; margin-left: 15px; }
.tools svg { width: 14px; height: 14px; }
.cp { width: 20px; height: 20px; margin-left: 17px; }
.view { display: flex; height: 442px; padding-left: 2px; }
.web { width: 766px; height: 439px; background: #fff; border-radius: 6px; box-shadow: 0 0 2px #c4c4c4; display: flex; flex-direction: column; color: #33383c; font-size: 13.600px; }
.web nav { height: 45px; display: flex; align-items: center; border-bottom: 1px solid #ececec; box-shadow: 0 2px 4px #f4f4f4; padding: 0 0 0 10px; color: #33383c; }
.web nav b { font-weight: 400; font-size: 16.500px; width: 85px; letter-spacing: -.2px; }
.hm { width: 50px; letter-spacing: -.3px; }
.pv { letter-spacing: -.3px; }
article { flex: 1; text-align: center; }
article h1 { font-weight: 300; font-size: 42px; line-height: 54px; margin-top: 11px; letter-spacing: -1px; }
article p { font-size: 13.200px; line-height: 20px; margin-top: 4px; letter-spacing: -.04px; }
.web a { color: #2d74d8; text-decoration: underline; }
.web footer { height: 50px; border-top: 1px solid #e6e6e6; padding: 15px 0 0 100px; line-height: 20px; color: #6c757d; font-size: 13.200px; letter-spacing: .05px; }
.side { width: 36px; display: flex; flex-direction: column; align-items: center; padding-top: 11px; }
.side svg { width: 14px; height: 14px; margin-bottom: 18.600px; }
.side hr { width: 23px; height: 1px; border: 0; background: #ccc; flex: none; margin: -.5px 0 19.500px; }
.side .pl { margin-bottom: 0; }
.side .h2 { margin: auto 0 10px; }
.side .gear { margin-bottom: 11px; }
```
